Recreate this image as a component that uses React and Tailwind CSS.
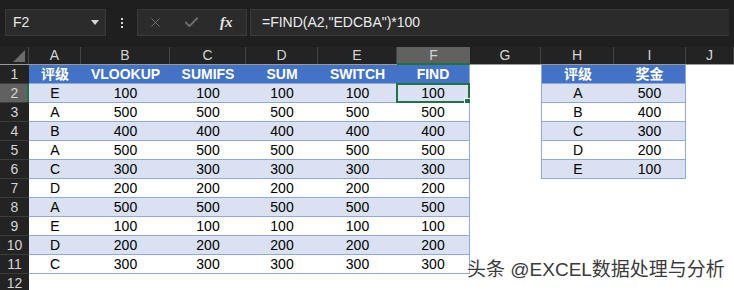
import { X, Check } from 'lucide-react'

const font = { fontFamily: '"Liberation Sans", "Noto Sans CJK SC", sans-serif' }

// column letters with their widths (the last one runs to the window edge)
const columns = [
  { key: 'A', w: 'w-[52px]' },
  { key: 'B', w: 'w-[89px]' },
  { key: 'C', w: 'w-[76px]' },
  { key: 'D', w: 'w-[72px]' },
  { key: 'E', w: 'w-[79px]' },
  { key: 'F', w: 'w-[73px]' },
  { key: 'G', w: 'w-[71px]' },
  { key: 'H', w: 'w-[73px]' },
  { key: 'I', w: 'w-[72px]' },
  { key: 'J', w: 'flex-1' },
]

const grades = ['E', 'A', 'B', 'A', 'C', 'D', 'A', 'E', 'D', 'C']
const bonus = { A: 500, B: 400, C: 300, D: 200, E: 100 }
const mainHead = ['评级', 'VLOOKUP', 'SUMIFS', 'SUM', 'SWITCH', 'FIND']
const sideRows = ['A', 'B', 'C', 'D', 'E']

function cellFor(row, col) {
  // main table A1:F11
  if (col <= 5 && row <= 11) {
    const banded = row > 1 && row % 2 === 0
    const text =
      row === 1 ? mainHead[col] : col === 0 ? grades[row - 2] : bonus[grades[row - 2]]
    return {
      text,
      head: row === 1,
      bg: row === 1 ? 'bg-[#4472c4]' : banded ? 'bg-[#d9e1f2]' : 'bg-white',
      edge: 'border-b border-[#8ea9db]' + (col === 5 ? ' border-r' : ''),
    }
  }
  // lookup table H1:I6
  if ((col === 7 || col === 8) && row <= 6) {
    const banded = row > 1 && row % 2 === 0
    const g = sideRows[row - 2]
    const text = row === 1 ? (col === 7 ? '评级' : '奖金') : col === 7 ? g : bonus[g]
    return {
      text,
      head: row === 1,
      bg: row === 1 ? 'bg-[#4472c4]' : banded ? 'bg-[#d9e1f2]' : 'bg-white',
      edge: 'border-b border-[#8ea9db]' + (col === 7 ? ' border-l' : ' border-r'),
    }
  }
  return { text: '', head: false, bg: 'bg-white', edge: '' }
}

function TopBar() {
  return (
    <div className="flex h-[47px] items-start gap-0 bg-[#1f1f1f] px-[5px] pt-[9px]">
      <div className="flex h-[27px] w-[101px] items-center justify-between border border-[#3a3a3a] bg-[#2b2b2b] pl-[7px] pr-[6px] text-[14px] text-[#e8e8e8]">
        <span>F2</span>
        <span className="h-0 w-0 border-x-[4px] border-t-[5px] border-x-transparent border-t-[#d6d6d6]" />
      </div>
      <div className="flex h-[27px] w-[31px] flex-col items-center justify-center gap-[2px]">
        <span className="h-[2px] w-[2px] bg-[#d8d8d8]" />
        <span className="h-[2px] w-[2px] bg-[#d8d8d8]" />
        <span className="h-[2px] w-[2px] bg-[#d8d8d8]" />
      </div>
      <div className="flex h-[27px] w-[110px] items-center border border-[#3a3a3a] bg-[#2b2b2b] pl-[10px]">
        <X size={15} strokeWidth={1.6} className="text-[#6e6e6e]" />
        <Check size={17} strokeWidth={2.6} className="ml-[20px] text-[#6e6e6e]" />
        <span
          className="ml-[20px] text-[15px] font-bold italic text-[#e6e6e6]"
          style={{ fontFamily: '"Liberation Serif", serif' }}
        >
          fx
        </span>
      </div>
      <div className="ml-[3px] flex h-[27px] flex-1 items-center border border-r-0 border-[#3a3a3a] bg-[#2b2b2b] pl-[11px] text-[14px] text-[#ececec]">
        =FIND(A2,"EDCBA")*100
      </div>
    </div>
  )
}

function ColumnHeader() {
  return (
    <div className="flex h-[18px] border-b border-[#9a9a9a] bg-[#232323] text-[14px] leading-[17px] text-[#d4d4d4]">
      <div className="relative w-[29px] border-r border-[#444]">
        <span className="absolute bottom-[2px] right-[3px] h-0 w-0 border-b-[12px] border-l-[12px] border-b-[#6b6b6b] border-l-transparent" />
      </div>
      {columns.map((c) => (
        <div
          key={c.key}
          className={`${c.w} relative text-center ${c.key === 'F' ? 'bg-[#616161]' : 'border-r border-[#444]'}`}
        >
          {c.key}
          {c.key === 'F' && <span className="absolute -bottom-[1px] left-0 h-[2px] w-full bg-[#1e7145]" />}
        </div>
      ))}
    </div>
  )
}

function Row({ n }) {
  const selectedRow = n === 2
  return (
    <div className="flex h-[19px] text-[14px] leading-[18px]">
      <div
        className={`relative w-[29px] border-b border-[#3c3c3c] text-center text-[#d4d4d4] ${selectedRow ? 'bg-[#616161]' : 'bg-[#232323]'}`}
      >
        {n}
        {selectedRow && <span className="absolute -right-0 top-0 h-full w-[2px] bg-[#1e7145]" />}
      </div>
      {columns.map((c, i) => {
        const cell = cellFor(n, i)
        return (
          <div
            key={c.key}
            className={`${c.w} relative text-center ${cell.bg} ${cell.edge} ${cell.head ? 'font-bold text-white' : 'text-black'}`}
          >
            {cell.text}
            {n === 2 && c.key === 'F' && (
              <>
                <span className="absolute left-[-1px] top-[-1px] h-[20px] w-[74px] border-2 border-[#217346]" />
                <span className="absolute bottom-[-3px] right-[-2px] h-[6px] w-[6px] bg-[#217346] ring-1 ring-white" />
              </>
            )}
          </div>
        )
      })}
    </div>
  )
}

export default function App() {
  const rows = Array.from({ length: 12 }, (_, i) => i + 1)
  return (
    <div className="relative h-[290px] w-[734px] overflow-hidden bg-white" style={font}>
      <TopBar />
      <ColumnHeader />
      {rows.map((n) => (
        <Row key={n} n={n} />
      ))}
      {/* watermark */}
      <div className="absolute left-[467px] top-[257px] text-[19px] leading-[26px] text-[#3a3a3a] [text-shadow:0_0_2px_#fff]">
        头条 @EXCEL数据处理与分析
      </div>
    </div>
  )
}
